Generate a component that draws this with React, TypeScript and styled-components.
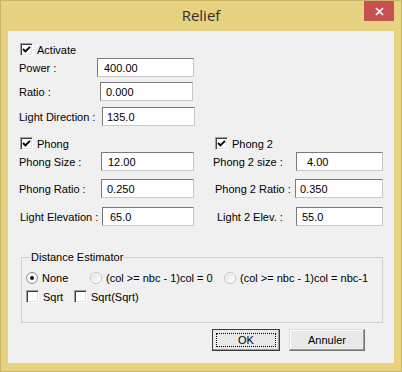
import React from "react";
import styled, { createGlobalStyle } from "styled-components";

const GlobalStyle = createGlobalStyle`
  html, body {
    margin: 0;
    padding: 0;
    background: #e6d281;
  }
  body {
    font-family: "Liberation Sans", Arial, sans-serif;
    font-size: 11px;
    color: #000;
  }
  * {
    box-sizing: border-box;
  }
`;

const Frame = styled.div`
  width: 402px;
  height: 372px;
  background: #e6d281;
  border: 1px solid #c9b566;
  display: flex;
  flex-direction: column;
`;

const TitleBar = styled.div`
  height: 30px;
  display: grid;
  grid-template-columns: 1fr auto 1fr;
  align-items: start;
`;

const Title = styled.div`
  grid-column: 2;
  font-family: "Open Sans", "Noto Sans", sans-serif;
  font-size: 15px;
  line-height: 29px;
  color: #2e2e2e;
`;

const CloseButton = styled.div`
  grid-column: 3;
  justify-self: end;
  width: 30px;
  height: 20px;
  margin-right: 7px;
  background: #c75050;
  display: flex;
  align-items: center;
  justify-content: center;
`;

const Client = styled.div`
  flex: 1;
  margin: 0 7px 8px 7px;
  background: #f0f0f0;
  padding: 12px 0 0 11px;
  display: flex;
  flex-direction: column;
`;

const CheckRow = styled.label<{ $indent?: number; $top?: number }>`
  display: flex;
  align-items: center;
  gap: 4px;
  height: 13px;
  margin-left: ${(p) => p.$indent ?? 0}px;
  margin-top: ${(p) => p.$top ?? 0}px;
  white-space: nowrap;
`;

const CheckBox = styled.span`
  width: 13px;
  height: 13px;
  flex: none;
  background: #fff;
  border: 1px solid;
  border-color: #a0a0a0 #fff #fff #a0a0a0;
  box-shadow: inset 1px 1px 0 #404040, inset -1px -1px 0 #e3e3e3;
  display: flex;
  align-items: center;
  justify-content: center;
`;

const FieldRow = styled.div<{ $top: number; $indent?: number }>`
  display: flex;
  align-items: center;
  height: 19px;
  margin-top: ${(p) => p.$top}px;
`;

const FieldLabel = styled.span<{ $w: number; $indent?: number }>`
  width: ${(p) => p.$w}px;
  padding-left: ${(p) => p.$indent ?? 0}px;
  flex: none;
  white-space: nowrap;
  padding-top: 1px;
`;

const TextInput = styled.input<{ $w: number; $pad: number }>`
  width: ${(p) => p.$w}px;
  height: 19px;
  padding: 0 0 0 ${(p) => p.$pad}px;
  margin: 0;
  border: 1px solid;
  border-color: #7a7a7a #c8c8c8 #c8c8c8 #7a7a7a;
  background: #fff;
  font-family: "Liberation Sans", Arial, sans-serif;
  font-size: 11px;
  color: #000;
  outline: none;
`;

const PhongGrid = styled.div`
  display: grid;
  grid-template-columns: 194px 1fr;
  margin-top: 11px;
`;

const Column = styled.div`
  display: flex;
  flex-direction: column;
`;

const GroupBox = styled.fieldset`
  margin: 25px 0 0 2px;
  width: 362px;
  padding: 0 0 19px 4px;
  border: 1px solid #d0d0d0;
  min-width: 0;
`;

const Legend = styled.legend`
  margin-left: 4px;
  padding: 0 1px;
  line-height: 13px;
`;

const OptionRow = styled.div<{ $top: number }>`
  display: flex;
  align-items: center;
  margin-top: ${(p) => p.$top}px;
  height: 13px;
`;

const Option = styled.label<{ $w?: number }>`
  display: flex;
  align-items: center;
  gap: 4px;
  width: ${(p) => (p.$w ? `${p.$w}px` : "auto")};
  flex: none;
  white-space: nowrap;
`;

const ButtonRow = styled.div`
  display: flex;
  justify-content: flex-end;
  gap: 9px;
  margin: 6px 29px 0 0;
`;

const Button = styled.button<{ $w: number; $default?: boolean }>`
  width: ${(p) => p.$w}px;
  height: 22px;
  padding: 0;
  font-family: "Liberation Sans", Arial, sans-serif;
  font-size: 11px;
  color: #000;
  background: #e9e9e9;
  border: 1px solid;
  border-color: ${(p) => (p.$default ? "#3c3c3c" : "#dcdcdc #707070 #707070 #dcdcdc")};
  box-shadow: ${(p) => (p.$default ? "inset -1px -1px 0 #a0a0a0" : "inset -1px -1px 0 #a0a0a0, inset 1px 1px 0 #fff")};
  position: relative;
`;

const FocusRing = styled.span`
  position: absolute;
  inset: 3px;
  border: 1px dotted #000;
  display: flex;
  align-items: center;
  justify-content: center;
`;

const Check = () => (
  <CheckBox>
    <svg width="9" height="9" viewBox="0 0 9 9">
      <path d="M1 4 L3.4 6.4 L8 1.8" fill="none" stroke="#000" strokeWidth="1.9" />
    </svg>
  </CheckBox>
);

const Radio = ({ on }: { on?: boolean }) => (
  <svg width="12" height="12" viewBox="0 0 12 12" style={{ flex: "none" }}>
    <defs>
      <linearGradient id="rg" x1="0" y1="0" x2="1" y2="1">
        <stop offset="0" stopColor="#dcdcdc" />
        <stop offset="1" stopColor="#ffffff" />
      </linearGradient>
    </defs>
    <circle cx="6" cy="6" r="5.5" fill="#fff" stroke={on ? "#8a8a8a" : "#c2c2c2"} />
    <circle cx="6" cy="6" r="4.3" fill="url(#rg)" opacity={on ? 0.3 : 0.8} />
    {on && <circle cx="6" cy="6" r="2" fill="#1a1a1a" />}
  </svg>
);

type Field = { label: string; value: string; lw: number; iw: number; pad: number; top: number; indent?: number };

const leftFields: Field[] = [
  { label: "Phong Size :", value: "12.00", lw: 82, iw: 93, pad: 6, top: 2 },
  { label: "Phong Ratio :", value: "0.250", lw: 82, iw: 93, pad: 5, top: 8 },
  { label: "Light Elevation :", value: "65.0", lw: 83, iw: 92, pad: 7, top: 9, indent: 1 },
];

const rightFields: Field[] = [
  { label: "Phong 2 size :", value: "4.00", lw: 83, iw: 87, pad: 10, top: 2 },
  { label: "Phong 2 Ratio :", value: "0.350", lw: 82, iw: 88, pad: 4, top: 8, indent: 2 },
  { label: "Light 2 Elev. :", value: "55.0", lw: 83, iw: 87, pad: 5, top: 9, indent: 4 },
];

const renderField = (f: Field) => (
  <FieldRow key={f.label} $top={f.top}>
    <FieldLabel $w={f.lw} $indent={f.indent}>{f.label}</FieldLabel>
    <TextInput $w={f.iw} $pad={f.pad} defaultValue={f.value} />
  </FieldRow>
);

export default function App() {
  return (
    <>
      <GlobalStyle />
      <Frame>
        <TitleBar>
          <Title>Relief</Title>
          <CloseButton>
            <svg width="9" height="9" viewBox="0 0 9 9">
              <path d="M1 1 L8 8 M8 1 L1 8" stroke="#fff" strokeWidth="1.7" />
            </svg>
          </CloseButton>
        </TitleBar>
        <Client>
          <CheckRow $indent={1}>
            <Check />
            Activate
          </CheckRow>
          {renderField({ label: "Power :", value: "400.00", lw: 78, iw: 97, pad: 6, top: 2 })}
          {renderField({ label: "Ratio :", value: "0.000", lw: 81, iw: 93, pad: 5, top: 5 })}
          {renderField({ label: "Light Direction :", value: "135.0", lw: 83, iw: 93, pad: 4, top: 6 })}
          <PhongGrid>
            <Column>
              <CheckRow $indent={1}>
                <Check />
                Phong
              </CheckRow>
              {leftFields.map(renderField)}
            </Column>
            <Column>
              <CheckRow $indent={2}>
                <Check />
                Phong 2
              </CheckRow>
              {rightFields.map(renderField)}
            </Column>
          </PhongGrid>
          <GroupBox>
            <Legend>Distance Estimator</Legend>
            <OptionRow $top={7}>
              <Option $w={64}>
                <Radio on />
                None
              </Option>
              <Option $w={134}>
                <Radio />
                (col &gt;= nbc - 1)col = 0
              </Option>
              <Option>
                <Radio />
                (col &gt;= nbc - 1)col = nbc-1
              </Option>
            </OptionRow>
            <OptionRow $top={6}>
              <Option $w={48}>
                <CheckBox />
                Sqrt
              </Option>
              <Option>
                <CheckBox />
                Sqrt(Sqrt)
              </Option>
            </OptionRow>
          </GroupBox>
          <ButtonRow>
            <Button $w={68} $default>
              <FocusRing>OK</FocusRing>
            </Button>
            <Button $w={76}>Annuler</Button>
          </ButtonRow>
        </Client>
      </Frame>
    </>
  );
}
